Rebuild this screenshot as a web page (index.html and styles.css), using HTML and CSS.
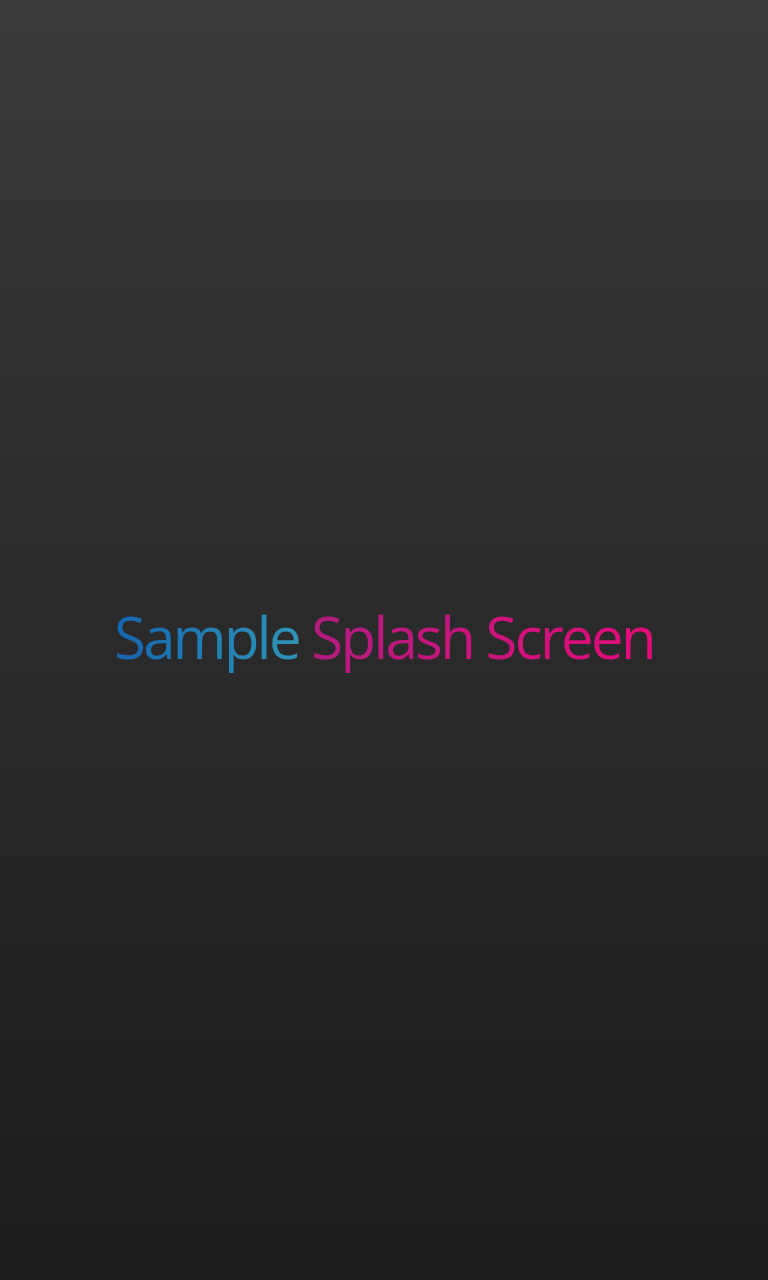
FILE: index.html
```html
<!DOCTYPE html>
<html>
<head>
<meta charset="utf-8">
<link rel="stylesheet" href="styles.css">
</head>
<body>
<main class="splash">
  <h1 class="title"><span class="word-blue">Sample</span> <span class="word-pink">Splash Screen</span></h1>
</main>
</body>
</html>
```
FILE: styles.css
```css
html, body {
  margin: 0;
  padding: 0;
  height: 100%;
}
body {
  background: linear-gradient(to bottom, #393939 0%, #2a2a2a 50%, #1c1c1c 100%);
}
.splash {
  height: 1280px;
  display: flex;
  align-items: center;
  justify-content: center;
}
.title {
  margin: 0;
  font-family: "Open Sans", "Noto Sans", sans-serif;
  font-weight: 400;
  font-size: 58px;
  letter-spacing: -2.6px;
  line-height: 1;
  padding-bottom: 6px;
  white-space: nowrap;
}
.word-blue {
  background: linear-gradient(to right, #1466b0, #2e95b8);
  -webkit-background-clip: text;
  background-clip: text;
  color: transparent;
}
.word-pink {
  background: linear-gradient(to right, #b31c80, #e30c7a);
  -webkit-background-clip: text;
  background-clip: text;
  color: transparent;
}
```
